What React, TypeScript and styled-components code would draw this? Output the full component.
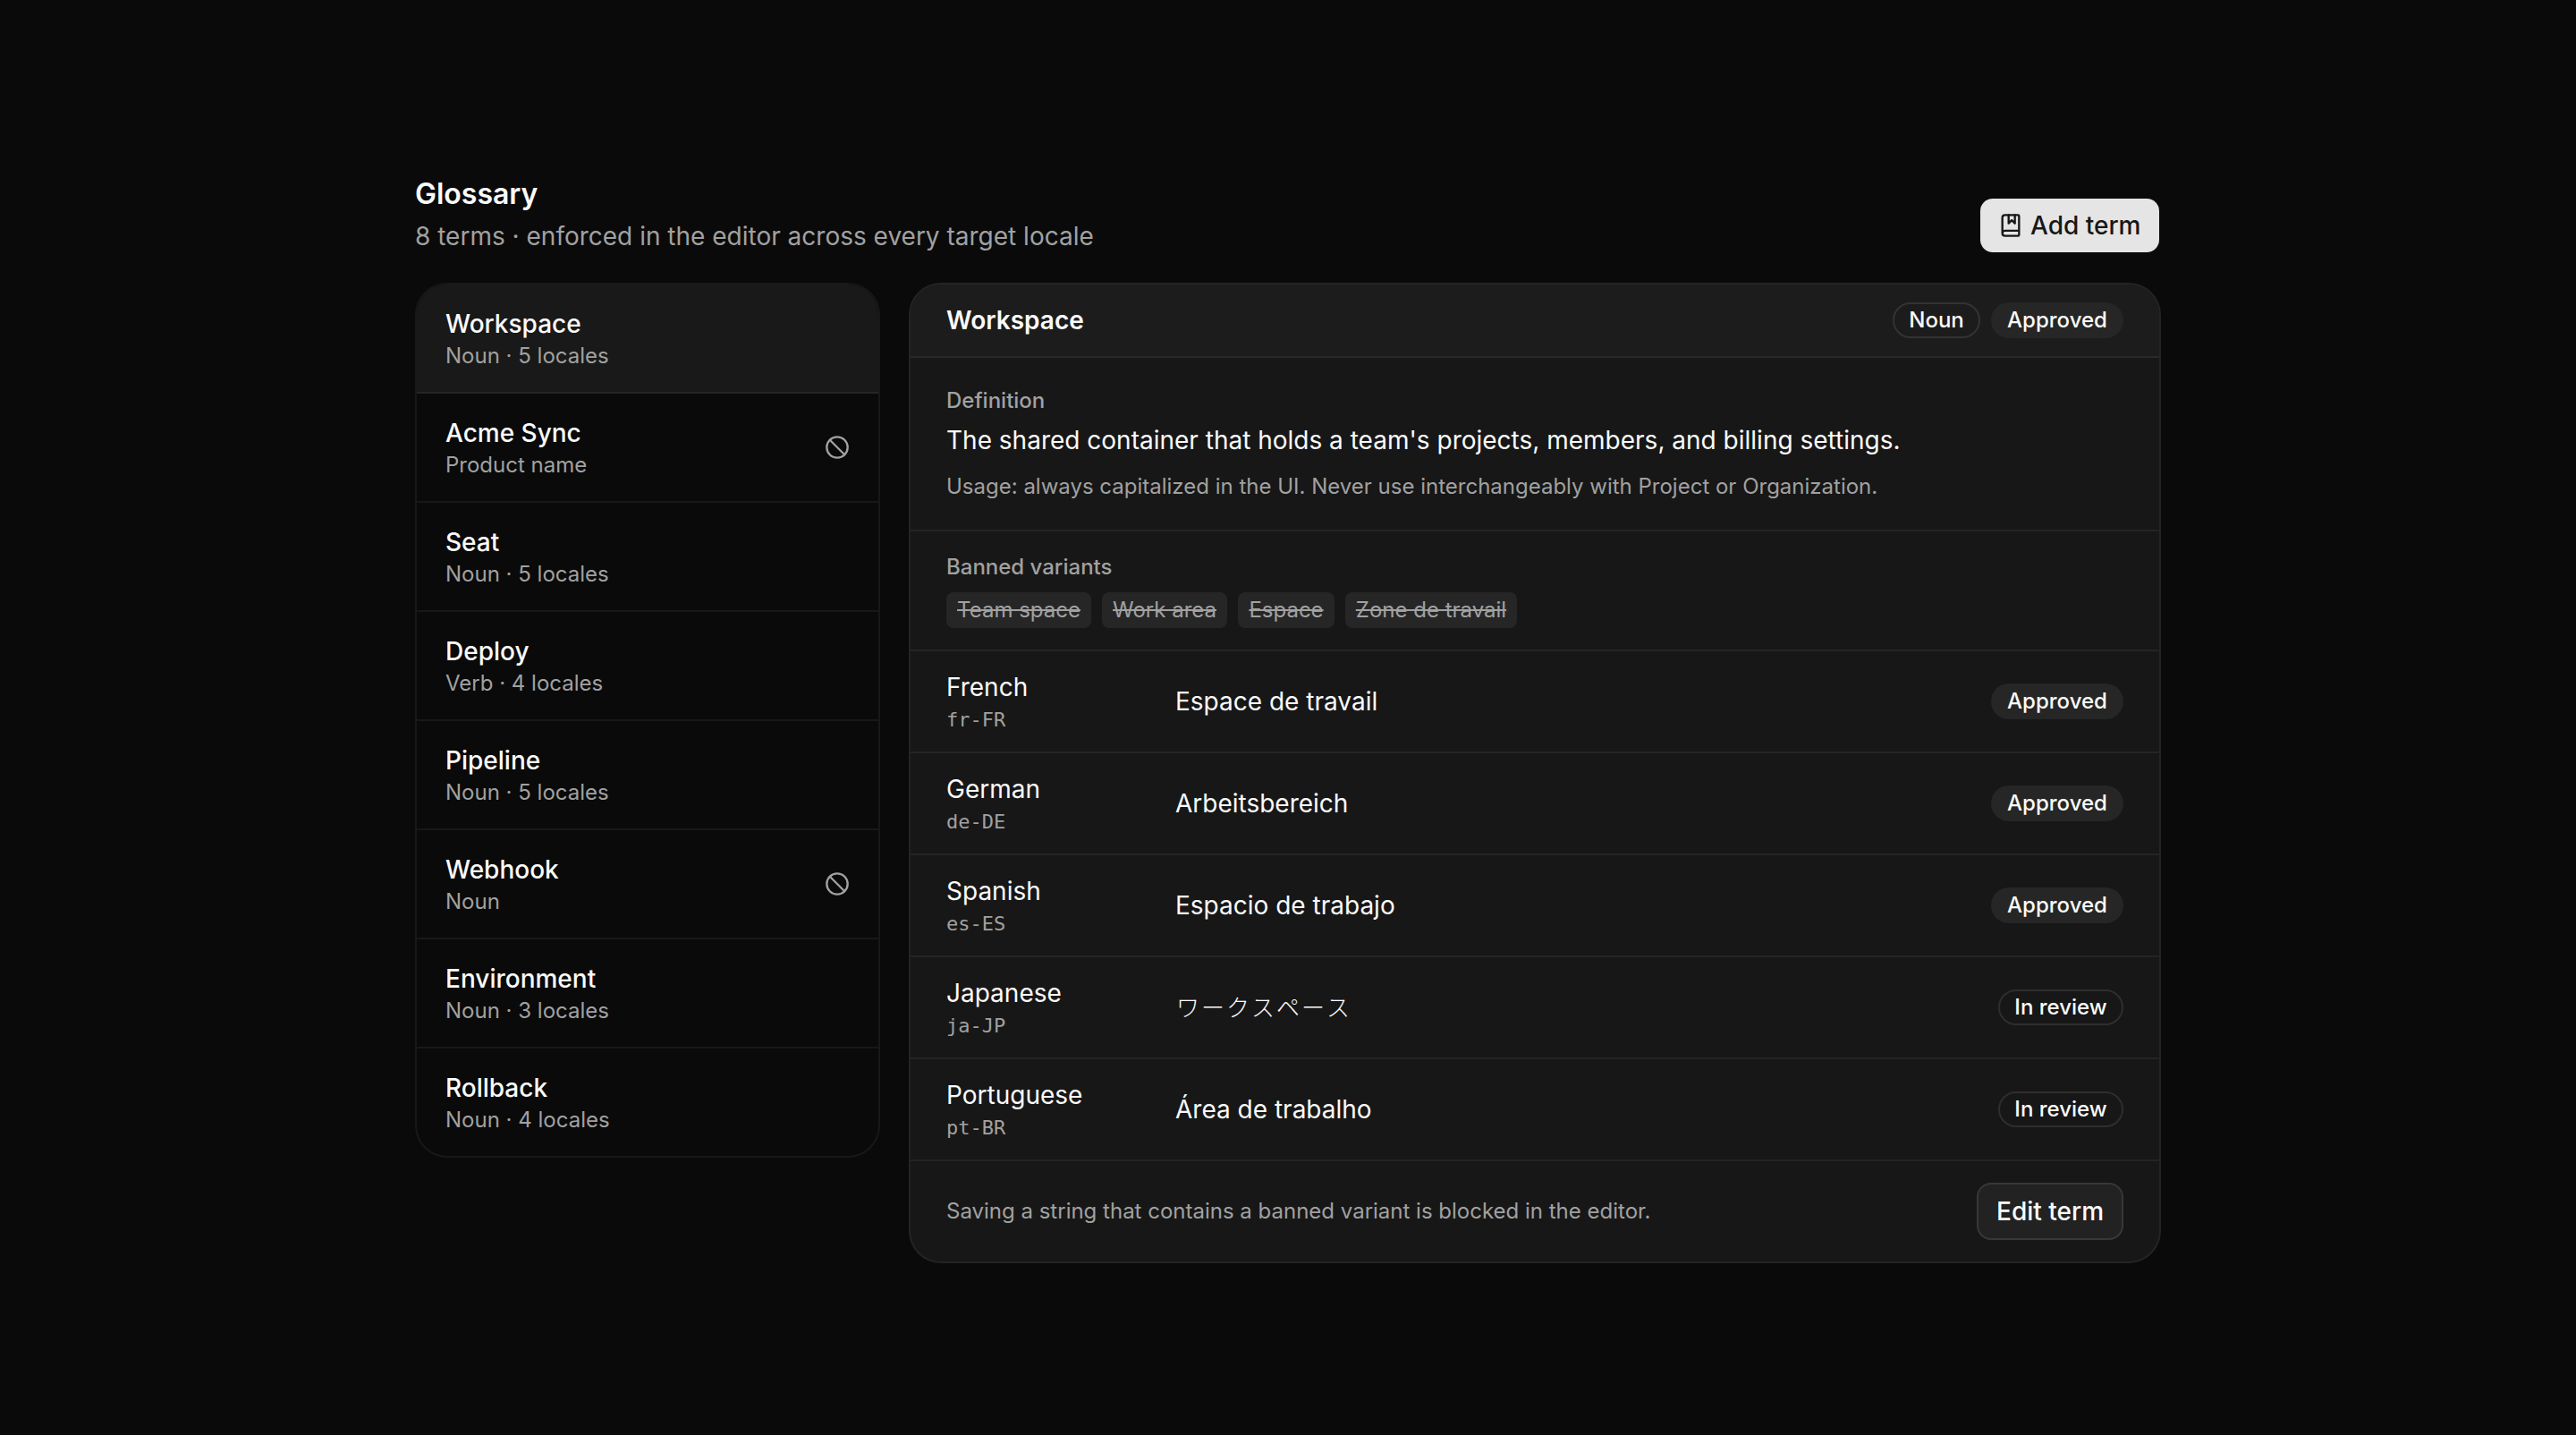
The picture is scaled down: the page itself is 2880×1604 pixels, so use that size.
import React from "react";
import styled, { createGlobalStyle, css } from "styled-components";
import { Ban, BookMarked } from "lucide-react";

const color = {
  page: "#0a0a0a",
  card: "#171717",
  header: "#1c1c1c",
  selected: "#191919",
  chip: "#262626",
  text: "#fafafa",
  muted: "#a1a1a1",
  primary: "#e5e5e5",
  line: "rgba(255, 255, 255, 0.06)",
  outline: "rgba(255, 255, 255, 0.1)",
};

const GlobalStyle = createGlobalStyle`
  *, *::before, *::after { box-sizing: border-box; }
  body {
    margin: 0;
    background: ${color.page};
    color: ${color.text};
    font-family: Inter, "Noto Sans CJK JP", sans-serif;
    font-size: 28px;
    line-height: 40px;
  }
  h1, h2, p { margin: 0; }
  button { font: inherit; color: inherit; cursor: pointer; }
`;

const Page = styled.main`
  min-height: 100vh;
  display: flex;
  align-items: center;
  justify-content: center;
`;

const Glossary = styled.section`
  width: 1952px;
  display: flex;
  flex-direction: column;
  gap: 32px;
`;

const Toolbar = styled.header`
  display: flex;
  align-items: flex-end;
  justify-content: space-between;
`;

const Heading = styled.div`
  display: flex;
  flex-direction: column;
  gap: 4px;
`;

const Title = styled.h1`
  height: 48px;
  font-size: 32px;
  line-height: 50px;
  font-weight: 600;
`;

const Subtitle = styled.p`
  color: ${color.muted};
`;

const Button = styled.button<{ $primary?: boolean }>`
  height: 64px;
  display: inline-flex;
  align-items: center;
  gap: 8px;
  padding: 0 20px;
  border: 2px solid transparent;
  border-radius: 16px;
  font-weight: 500;
  white-space: nowrap;
  ${(p) =>
    p.$primary
      ? css`
          width: 204px;
          background: ${color.primary};
          background-clip: padding-box;
          color: #171717;
        `
      : css`
          background: #222222;
          border-color: ${color.outline};
        `}
`;

const Columns = styled.div`
  display: grid;
  grid-template-columns: 520px 1fr;
  gap: 32px;
  align-items: start;
`;

const TermList = styled.nav`
  display: flex;
  flex-direction: column;
  border: 2px solid ${color.line};
  border-radius: 36px;
  overflow: hidden;
`;

const TermItem = styled.button<{ $selected?: boolean }>`
  display: flex;
  align-items: center;
  justify-content: space-between;
  padding: 24px 32px;
  border: 0;
  border-bottom: 2px solid ${color.line};
  background: ${(p) => (p.$selected ? color.selected : "transparent")};
  text-align: left;

  &:last-child {
    border-bottom: 0;
  }

  svg {
    color: ${color.muted};
  }
`;

const TermText = styled.span`
  display: flex;
  flex-direction: column;
`;

const TermName = styled.span`
  font-weight: 500;
`;

const Small = styled.span`
  font-size: 24px;
  line-height: 32px;
  color: ${color.muted};
`;

const Label = styled(Small)`
  font-weight: 500;
`;

const Card = styled.article`
  display: flex;
  flex-direction: column;
  background: ${color.card};
  border: 2px solid ${color.line};
  border-radius: 36px;
  overflow: hidden;
`;

const CardHeader = styled.header`
  display: flex;
  align-items: center;
  justify-content: space-between;
  padding: 20px 40px;
  background: ${color.header};
  border-bottom: 2px solid ${color.line};
`;

const CardTitle = styled.h2`
  font-size: 28px;
  line-height: 40px;
  font-weight: 600;
`;

const Badges = styled.div`
  display: flex;
  gap: 12px;
`;

const Badge = styled.span<{ $outline?: boolean; $width: number }>`
  width: ${(p) => p.$width}px;
  height: 40px;
  display: inline-flex;
  align-items: center;
  justify-content: center;
  border: 2px solid ${(p) => (p.$outline ? color.outline : "transparent")};
  border-radius: 20px;
  background: ${(p) => (p.$outline ? "transparent" : color.chip)};
  font-size: 24px;
  line-height: 32px;
  font-weight: 500;
  white-space: nowrap;
`;

const Definition = styled.section`
  display: flex;
  flex-direction: column;
  padding: 32px 40px;
  border-bottom: 2px solid ${color.line};
`;

const DefinitionText = styled.p`
  margin: 8px 0 16px;
`;

const Banned = styled.section`
  display: flex;
  flex-direction: column;
  gap: 12px;
  padding: 24px 40px;
  border-bottom: 2px solid ${color.line};
`;

const Chips = styled.div`
  display: flex;
  gap: 12px;
`;

const Chip = styled.span<{ $width: number }>`
  width: ${(p) => p.$width}px;
  padding: 4px 0;
  border-radius: 8px;
  background: ${color.chip};
  color: ${color.muted};
  font-size: 24px;
  line-height: 32px;
  text-align: center;
  text-decoration: line-through;
  white-space: nowrap;
`;

const LocaleRow = styled.div`
  display: grid;
  grid-template-columns: 224px 1fr auto;
  column-gap: 32px;
  align-items: center;
  padding: 20px 40px;
  border-bottom: 2px solid ${color.line};
`;

const Locale = styled.div`
  display: flex;
  flex-direction: column;
`;

const Code = styled.span`
  height: 32px;
  font-family: "DejaVu Sans Mono", monospace;
  font-size: 22px;
  line-height: 34px;
  color: ${color.muted};
`;

const Translation = styled.span<{ $cjk?: boolean }>`
  ${(p) =>
    p.$cjk &&
    css`
      padding: 0 0 3px 1px;
      font-family: "Noto Sans CJK JP", sans-serif;
      font-size: 26px;
      font-weight: 300;
      letter-spacing: 2px;
      line-height: 37px;
      font-kerning: none;
    `}
`;

const CardFooter = styled.footer`
  display: flex;
  align-items: center;
  justify-content: space-between;
  padding: 24px 40px;
`;

const terms = [
  { name: "Workspace", meta: "Noun · 5 locales" },
  { name: "Acme Sync", meta: "Product name", locked: true },
  { name: "Seat", meta: "Noun · 5 locales" },
  { name: "Deploy", meta: "Verb · 4 locales" },
  { name: "Pipeline", meta: "Noun · 5 locales" },
  { name: "Webhook", meta: "Noun", locked: true },
  { name: "Environment", meta: "Noun · 3 locales" },
  { name: "Rollback", meta: "Noun · 4 locales" },
];

const banned = [
  { word: "Team space", width: 162 },
  { word: "Work area", width: 140 },
  { word: "Espace", width: 108 },
  { word: "Zone de travail", width: 192 },
];

const locales = [
  { name: "French", code: "fr-FR", value: "Espace de travail", approved: true },
  { name: "German", code: "de-DE", value: "Arbeitsbereich", approved: true },
  { name: "Spanish", code: "es-ES", value: "Espacio de trabajo", approved: true },
  { name: "Japanese", code: "ja-JP", value: "ワークスペース", approved: false, cjk: true },
  { name: "Portuguese", code: "pt-BR", value: "Área de trabalho", approved: false },
];

function Status({ approved }: { approved: boolean }) {
  return approved ? (
    <Badge $width={148}>Approved</Badge>
  ) : (
    <Badge $outline $width={140}>
      In review
    </Badge>
  );
}

export default function App() {
  return (
    <>
      <GlobalStyle />
      <Page>
        <Glossary>
          <Toolbar>
            <Heading>
              <Title>Glossary</Title>
              <Subtitle>8 terms · enforced in the editor across every target locale</Subtitle>
            </Heading>
            <Button $primary>
              <BookMarked size={28} />
              Add term
            </Button>
          </Toolbar>
          <Columns>
            <TermList>
              {terms.map((term, i) => (
                <TermItem key={term.name} $selected={i === 0}>
                  <TermText>
                    <TermName>{term.name}</TermName>
                    <Small>{term.meta}</Small>
                  </TermText>
                  {term.locked && <Ban size={28} />}
                </TermItem>
              ))}
            </TermList>
            <Card>
              <CardHeader>
                <CardTitle>Workspace</CardTitle>
                <Badges>
                  <Badge $outline $width={98}>
                    Noun
                  </Badge>
                  <Status approved />
                </Badges>
              </CardHeader>
              <Definition>
                <Label>Definition</Label>
                <DefinitionText>
                  The shared container that holds a team's projects, members, and billing settings.
                </DefinitionText>
                <Small>
                  Usage: always capitalized in the UI. Never use interchangeably with Project or Organization.
                </Small>
              </Definition>
              <Banned>
                <Label>Banned variants</Label>
                <Chips>
                  {banned.map(({ word, width }) => (
                    <Chip key={word} $width={width}>
                      {word}
                    </Chip>
                  ))}
                </Chips>
              </Banned>
              {locales.map((locale) => (
                <LocaleRow key={locale.code}>
                  <Locale>
                    <span>{locale.name}</span>
                    <Code>{locale.code}</Code>
                  </Locale>
                  <Translation $cjk={locale.cjk}>{locale.value}</Translation>
                  <Status approved={locale.approved} />
                </LocaleRow>
              ))}
              <CardFooter>
                <Small>Saving a string that contains a banned variant is blocked in the editor.</Small>
                <Button>Edit term</Button>
              </CardFooter>
            </Card>
          </Columns>
        </Glossary>
      </Page>
    </>
  );
}
